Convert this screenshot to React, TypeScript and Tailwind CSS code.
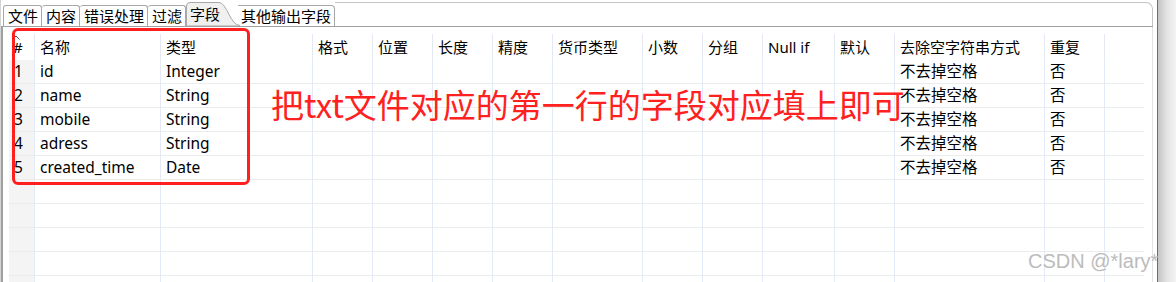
const font = { fontFamily: '"Noto Sans", "Noto Sans CJK SC", sans-serif' };

const columns = [
  { label: "#", w: "w-[25px]" },
  { label: "名称", w: "w-[126px]" },
  { label: "类型", w: "w-[152px]" },
  { label: "格式", w: "w-[60px]" },
  { label: "位置", w: "w-[60px]" },
  { label: "长度", w: "w-[60px]" },
  { label: "精度", w: "w-[60px]" },
  { label: "货币类型", w: "w-[90px]" },
  { label: "小数", w: "w-[60px]" },
  { label: "分组", w: "w-[60px]" },
  { label: "Null if", w: "w-[72px]" },
  { label: "默认", w: "w-[60px]" },
  { label: "去除空字符串方式", w: "w-[150px]" },
  { label: "重复", w: "w-[60px]" },
  { label: "", w: "w-[40px]" },
];

const rows: string[][] = [
  ["1", "id", "Integer"],
  ["2", "name", "String"],
  ["3", "mobile", "String"],
  ["4", "adress", "String"],
  ["5", "created_time", "Date"],
];

function cellValue(r: number, c: number) {
  const row = rows[r];
  if (!row) return "";
  if (c < 3) return row[c];
  if (c === 12) return "不去掉空格";
  if (c === 13) return "否";
  return "";
}

const tabs = ["文件", "内容", "错误处理", "过滤"];

function TabRow() {
  return (
    <div className="flex h-[27px] items-end border-b border-[#a0a0a0] pl-[2px]">
      {tabs.map((t, i) => (
        <div
          key={t}
          className={`h-[21px] pl-[4px] pr-[3px] flex items-center border-t border-r border-[#a8a8a8] rounded-t-[3px] bg-white text-[15px] leading-none text-black ${
            i === 0 ? "border-l" : ""
          }`}
        >
          {t}
        </div>
      ))}
      <div className="relative w-[52px] h-[24px] flex items-center">
        <svg
          className="absolute inset-0"
          width="54"
          height="24"
          viewBox="0 0 54 24"
        >
          <path
            d="M0.5 24 L0.5 4 Q0.5 0.5 4 0.5 L33 0.5 C41 0.5 44 23.5 54 23.5 L54 24 Z"
            fill="#f0f0f0"
            stroke="#a8a8a8"
            strokeWidth="1"
          />
        </svg>
        <span className="relative pl-[4px] text-[15px] leading-none text-black">
          字段
        </span>
      </div>
      <div className="h-[21px] pl-[3px] pr-[3px] flex items-center border-t border-r border-[#a8a8a8] rounded-tr-[4px] bg-white text-[15px] leading-none text-black">
        其他输出字段
      </div>
      <div className="flex-1 h-[24px] border-t border-r border-[#c4c4c4] rounded-tr-[7px]" />
    </div>
  );
}

function Grid() {
  return (
    <div className="flex-1 overflow-hidden border-l-2 border-[#a0a0a0] border-r border-r-[#e2e2e2] pt-[7px] pl-[6px]">
      <div className="flex h-[26px]">
        {columns.map((col, c) => (
          <div
            key={c}
            className={`${col.w} shrink-0 h-full flex items-center text-[15px] text-black whitespace-nowrap ${
              c === 0 ? "relative pl-[4px]" : "border-l border-[#e3e8f2] pl-[5px]"
            }`}
          >
            {c === 0 && (
              <svg
                className="absolute left-[3px] top-[1px]"
                width="8"
                height="5"
                viewBox="0 0 8 5"
              >
                <path d="M0.5 4.5 L4 1 L7.5 4.5" fill="none" stroke="#555" strokeWidth="1" />
              </svg>
            )}
            {col.label}
          </div>
        ))}
      </div>
      {Array.from({ length: 10 }).map((_, r) => (
        <div key={r} className="flex h-[24px]">
          {columns.map((col, c) => (
            <div
              key={c}
              className={`${col.w} shrink-0 h-full flex items-center pt-[1px] border-b border-[#ececec] text-[15.5px] text-black whitespace-nowrap ${
                c === 0
                  ? "bg-[#f4f4f4] pl-[5px]"
                  : "border-l border-l-[#e3e9f6] pl-[5px]"
              }`}
            >
              {cellValue(r, c)}
            </div>
          ))}
        </div>
      ))}
    </div>
  );
}

export default function App() {
  return (
    <div
      className="relative w-[1176px] h-[282px] bg-white overflow-hidden flex"
      style={font}
    >
      <div className="w-[1153px] h-full flex flex-col border-l border-[#d4d4d4]">
        <TabRow />
        <Grid />
      </div>
      <div className="w-[4px] h-full bg-white" />
      <div className="w-[1px] h-full bg-[#6e6e6e]" />
      <div className="flex-1 h-full bg-gradient-to-r from-[#c4c4c4] via-[#e4e4e4] to-[#f4f4f4]" />

      {/* annotation */}
      <div className="absolute left-[12px] top-[28px] w-[238px] h-[157px] border-[3px] border-[#ff1f1f] rounded-[6px]" />
      <div
        className="absolute left-[271px] top-[82px] text-[33px] leading-[44px] text-[#ff2020] whitespace-nowrap"
        style={{ fontFamily: '"Noto Sans CJK SC", "Noto Sans", sans-serif' }}
      >
        把txt文件对应的第一行的字段对应填上即可
      </div>
      <div
        className="absolute left-[1028px] top-[249px] text-[20px] leading-[24px] text-[#bcbcbc] whitespace-nowrap"
        style={{ fontFamily: '"Liberation Sans", Arial, sans-serif' }}
      >
        CSDN @*lary*
      </div>
    </div>
  );
}
